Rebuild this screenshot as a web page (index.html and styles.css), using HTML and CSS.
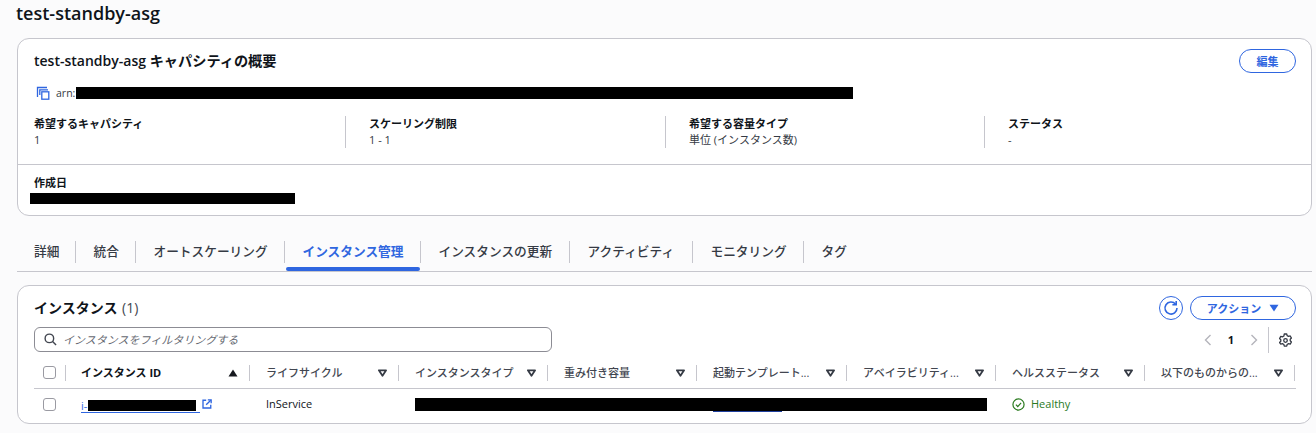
FILE: index.html
```html
<!DOCTYPE html>
<html lang="ja">
<head>
<meta charset="utf-8">
<title>test-standby-asg</title>
<link rel="stylesheet" href="styles.css">
</head>
<body>
<main class="page">
  <h1 class="title">test-standby-asg</h1>
  <section class="card summary">
    <div class="summary-head">
      <h2 class="heading"><span class="latin">test-standby-asg</span> キャパシティの概要</h2>
      <button class="btn edit">編集</button>
    </div>
    <div class="arn">
      <svg class="copy" viewBox="0 0 14 14" width="14" height="14"><path d="M1.5 11V1.5H11" /><path d="M3.8 9V3.8H12" /><rect x="5.8" y="5.8" width="7" height="7.4"/></svg>
      <span>arn:</span><span class="redact redact-arn"></span>
    </div>
    <div class="stats">
      <div class="stat"><div class="label">希望するキャパシティ</div><div class="value">1</div></div>
      <div class="stat"><div class="label">スケーリング制限</div><div class="value">1 - 1</div></div>
      <div class="stat"><div class="label">希望する容量タイプ</div><div class="value">単位 (インスタンス数)</div></div>
      <div class="stat"><div class="label">ステータス</div><div class="value">-</div></div>
    </div>
    <div class="created">
      <div class="label">作成日</div>
      <div class="redact redact-date"></div>
    </div>
  </section>

  <nav class="tabs">
    <a class="tab first">詳細</a>
    <a class="tab">統合</a>
    <a class="tab">オートスケーリング</a>
    <a class="tab active">インスタンス管理</a>
    <a class="tab">インスタンスの更新</a>
    <a class="tab">アクティビティ</a>
    <a class="tab">モニタリング</a>
    <a class="tab last">タグ</a>
  </nav>

  <section class="card instances">
    <div class="inst-head">
      <h2 class="heading inst-title">インスタンス <span class="count">(1)</span></h2>
      <div class="actions">
        <button class="btn refresh" aria-label="更新">
          <svg viewBox="0 0 16 16" width="16" height="16"><path d="M12.6 4.2A6 6 0 1 0 14 8"/><path d="M13.2 1v3.8H9.4"/></svg>
        </button>
        <button class="btn action">アクション <svg class="caret" viewBox="0 0 10 8" width="10" height="8"><path d="M.5.8h9L5 7.4z"/></svg></button>
      </div>
    </div>
    <div class="tools">
      <div class="search">
        <svg viewBox="0 0 14 14" width="13" height="13"><circle cx="5.8" cy="5.8" r="4.6"/><path d="M9.2 9.2 13 13"/></svg>
        <span>インスタンスをフィルタリングする</span>
      </div>
      <div class="pager">
        <svg class="chev" viewBox="0 0 8 12" width="8" height="12"><path d="M6.5 1 1.5 6l5 5"/></svg>
        <span class="page-no">1</span>
        <svg class="chev" viewBox="0 0 8 12" width="8" height="12"><path d="M1.5 1l5 5-5 5"/></svg>
        <span class="gear-wrap">
          <svg class="gear" viewBox="0 0 16 18" width="13" height="15"><path d="M6.5 1h3l.5 2 1.8 1 2-.6 1.5 2.6-1.5 1.500v1.900l1.500 1.500-1.500 2.600-2-.6-1.800 1-.5 2h-3l-.5-2-1.800-1-2 .6L.7 11.500 2.200 10V8.100L.7 6.600 2.200 4l2 .6L6 3.500z"/><circle cx="8" cy="9" r="2.200"/></svg>
        </span>
      </div>
    </div>
    <div class="grid head">
      <div class="th check"><span class="box"></span></div>
      <div class="th"><span class="strong">インスタンス ID</span><svg class="sort" viewBox="0 0 10 8" width="10" height="8"><path d="M.5 7.500h9L5 .5z"/></svg></div>
      <div class="th"><span>ライフサイクル</span><svg class="sort open" viewBox="0 0 10 8" width="9" height="8"><path d="M1 1h8L5 7z"/></svg></div>
      <div class="th"><span>インスタンスタイプ</span><svg class="sort open" viewBox="0 0 10 8" width="9" height="8"><path d="M1 1h8L5 7z"/></svg></div>
      <div class="th"><span>重み付き容量</span><svg class="sort open" viewBox="0 0 10 8" width="9" height="8"><path d="M1 1h8L5 7z"/></svg></div>
      <div class="th"><span>起動テンプレート...</span><svg class="sort open" viewBox="0 0 10 8" width="9" height="8"><path d="M1 1h8L5 7z"/></svg></div>
      <div class="th"><span>アベイラビリティ...</span><svg class="sort open" viewBox="0 0 10 8" width="9" height="8"><path d="M1 1h8L5 7z"/></svg></div>
      <div class="th"><span>ヘルスステータス</span><svg class="sort open" viewBox="0 0 10 8" width="9" height="8"><path d="M1 1h8L5 7z"/></svg></div>
      <div class="th"><span>以下のものからの...</span><svg class="sort open" viewBox="0 0 10 8" width="9" height="8"><path d="M1 1h8L5 7z"/></svg></div>
    </div>
    <div class="grid row">
      <div class="td check"><span class="box"></span></div>
      <div class="td id-cell">
        <a class="id-link">i-<span class="redact redact-id"></span></a>
        <svg class="ext" viewBox="0 0 12 12" width="10" height="10"><path d="M5 1.500H1.200v9.300h9.300V7"/><path d="M5 7l5.500-5.500"/><path d="M7 1h4v4"/></svg>
      </div>
      <div class="td">InService</div>
      <div class="td wide"><span class="redact redact-type"></span></div>
      <div class="td health">
        <svg viewBox="0 0 14 14" width="13" height="13"><circle cx="7" cy="7" r="6"/><path d="M4.200 7.200l2 2 3.600-4"/></svg>
        <span>Healthy</span>
      </div>
    </div>
  </section>
</main>
</body>
</html>
```
FILE: styles.css
```css
* { box-sizing: border-box; }
html, body { margin: 0; height: 433px; overflow: hidden; }
body {
  background: #fbfbfc;
  color: #0f141a;
  font-family: "Open Sans", "Noto Sans CJK JP", sans-serif;
  font-size: 11px;
  line-height: 16px;
}
.page { padding: 0 4px 0 17px; }
.title {
  margin: 0 0 0 -1px;
  height: 38px;
  padding-top: 2px;
  font-size: 18px;
  line-height: 22px;
  font-weight: 600;
}
.card {
  background: #fff;
  border: 1px solid #c6c6cd;
  border-radius: 12px;
}
.summary { height: 178px; }
.summary-head {
  display: flex;
  justify-content: space-between;
  align-items: center;
  padding: 10px 15px 0 16px;
  height: 34px;
}
.heading { margin: 0; font-size: 14.2px; line-height: 20px; font-weight: 700; }
.latin { font-size: 14px; font-weight: 600; }
.btn {
  font-family: inherit;
  font-weight: 700;
  font-size: 11px;
  color: #2f66e0;
  background: #fff;
  border: 1px solid #2f66e0;
  border-radius: 12px;
  height: 24px;
  padding: 0;
  display: inline-flex;
  align-items: center;
  justify-content: center;
}
.edit { width: 57px; }
.arn {
  margin-top: 12px;
  padding-left: 18px;
  height: 16px;
  display: flex;
  align-items: center;
  color: #353a44;
  font-size: 10.5px;
}
.copy { fill: none; stroke: #2f66e0; stroke-width: 1.3; margin-right: 6px; }
.redact { display: inline-block; background: #000; }
.redact-arn { width: 777px; height: 12px; margin-left: 1px; }
.stats {
  display: grid;
  grid-template-columns: 312px 320px 319px 1fr;
  margin: 15px 0 16px 16px;
  height: 32px;
}
.stat { padding-left: 23px; border-right: 1px solid #c6c6cd; }
.stat:first-child { padding-left: 0; }
.stat:last-child { border-right: 0; }
.label { font-weight: 700; color: #0f141a; }
.value { color: #353a44; }
.created {
  border-top: 1px solid #c6c6cd;
  padding: 10px 0 0 16px;
}
.redact-date { display: block; width: 265px; height: 11px; margin: 2px 0 0 -4px; }
.tabs {
  display: grid;
  grid-template-columns: 59px 60px 149px 136px 149px 123px 111px 1fr;
  height: 56px;
  padding-top: 25px;
  border-bottom: 1px solid #c6c6cd;
}
.tab {
  position: relative;
  height: 22px;
  padding-left: 17.500px;
  border-right: 1px solid #c6c6cd;
  font-size: 12.7px;
  line-height: 21px;
  font-weight: 500;
  color: #353a44;
  white-space: nowrap;
}
.tab.first { padding-left: 17px; }
.tab.last { border-right: 0; }
.tab.active { color: #2f66e0; font-weight: 700; }
.tab.active::after {
  content: "";
  position: absolute;
  left: 1px;
  right: 0;
  top: 26px;
  height: 4px;
  border-radius: 2px;
  background: #2f66e0;
}
.instances { height: 139px; margin-top: 13px; padding: 10px 15px 0 16px; }
.inst-head { display: flex; justify-content: space-between; align-items: center; height: 24px; }
.inst-title { font-size: 14px; }
.count { font-weight: 400; color: #424650; margin-left: 1px; }
.actions { display: flex; gap: 7px; }
.refresh { width: 24px; border-radius: 50%; }
.refresh svg { fill: none; stroke: #2f66e0; stroke-width: 1.6; }
.action { width: 106px; gap: 8px; }
.caret { fill: #2f66e0; }
.tools { display: flex; justify-content: space-between; margin-top: 7px; height: 26px; }
.search {
  width: 518px;
  height: 25px;
  border: 1px solid #8c8c94;
  border-radius: 6px;
  display: flex;
  align-items: center;
  padding-left: 9px;
  gap: 6px;
  color: #656871;
  font-style: italic;
}
.search svg { fill: none; stroke: #424650; stroke-width: 1.5; flex: none; }
.pager { display: flex; align-items: center; height: 26px; }
.chev { fill: none; stroke: #b4b4bb; stroke-width: 1.4; }
.page-no { width: 38px; text-align: center; font-weight: 700; }
.gear-wrap {
  margin-left: 10px;
  border-left: 1px solid #c6c6cd;
  width: 28px;
  height: 26px;
  display: flex;
  align-items: center;
  justify-content: flex-end;
  padding-right: 4px;
}
.gear { fill: none; stroke: #353a44; stroke-width: 1.6; stroke-linejoin: round; }
.grid { display: grid; grid-template-columns: 32px 184px 149px 149px 149px 150px 149px 149px 150px; }
.head { padding-top: 12px; padding-bottom: 7px; border-bottom: 1px solid #c6c6cd; }
.th {
  height: 16px;
  display: flex;
  align-items: center;
  justify-content: space-between;
  padding: 0 11.500px 0 16px;
  border-right: 1px solid #c6c6cd;
  font-weight: 500;
  color: #424650;
  white-space: nowrap;
}
.th:nth-child(2) { padding-left: 15px; }
.strong { font-weight: 700; color: #0f141a; }
.check { padding: 0 0 0 9px; justify-content: flex-start; }
.th.check .box { margin-top: -2px; }
.box { display: block; width: 13px; height: 13px; border: 1px solid #9a9aa2; border-radius: 3px; background: #fff; }
.sort { fill: #16191f; flex: none; }
.sort.open { fill: none; stroke: #353a44; stroke-width: 2; stroke-linejoin: round; }
.row { height: 30px; }
.td { display: flex; align-items: center; padding-left: 16px; color: #0f141a; }
.td.check { padding-left: 9px; }
.id-cell { padding-left: 15px; }
.id-link { color: #2f66e0; border-bottom: 1px solid #2f66e0; line-height: 13px; height: 14px; width: 119px; display: flex; align-items: center; margin-top: 3px; }
.redact-id { width: 108px; height: 11px; margin-left: 1px; }
.ext { fill: none; stroke: #2f66e0; stroke-width: 1.6; margin: -1px 0 0 2px; flex: none; }
.wide { grid-column: 4 / span 4; }
.redact-type { position: relative; width: 572px; height: 13px; }
.redact-type::after {
  content: "";
  position: absolute;
  left: 298px;
  top: 13px;
  width: 69px;
  height: 1px;
  background: #1f3f9e;
}
.health { grid-column: 8 / span 2; gap: 6px; color: #2a7a1f; }
.health svg { fill: none; stroke: #2a7a1f; stroke-width: 1.3; }
```
